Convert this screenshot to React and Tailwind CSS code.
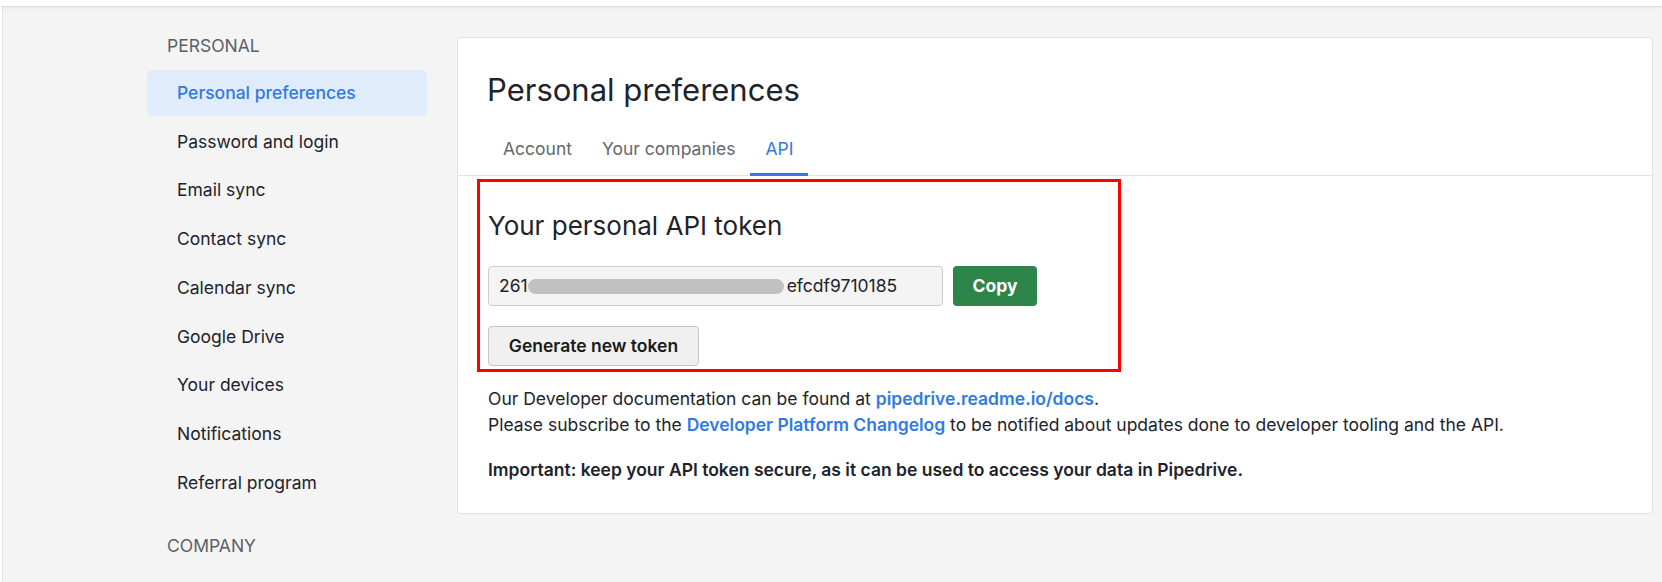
const personalItems = [
  'Personal preferences',
  'Password and login',
  'Email sync',
  'Contact sync',
  'Calendar sync',
  'Google Drive',
  'Your devices',
  'Notifications',
  'Referral program',
];

const tabs = ['Account', 'Your companies', 'API'];

function Sidebar() {
  return (
    <aside className="w-[280px] shrink-0 pt-[27px]">
      <div className="px-5 text-[17.5px] leading-[26px] text-[#5d5f66] mb-[11px]">PERSONAL</div>
      <nav className="flex flex-col gap-[2.75px]">
        {personalItems.map((item, i) => (
          <a
            key={item}
            className={`h-[46px] flex items-center px-[30px] rounded-md text-[17.5px] ${
              i === 0 ? 'bg-[#e0ecfc] text-[#317ae2] font-medium' : 'text-[#21232c]'
            }`}
          >
            {item}
          </a>
        ))}
      </nav>
      <div className="px-5 mt-[27px] text-[17.5px] leading-[26px] text-[#5d5f66]">COMPANY</div>
    </aside>
  );
}

function TokenBox() {
  return (
    <div className="-ml-[11px] w-[644px] border-[3px] border-[#ff0000] pl-[8px] pt-[27.5px] pb-[3px]">
      <h2 className="text-[26px] leading-[32px] font-normal text-[#21232c]">Your personal API token</h2>
      <div className="mt-[24.5px] flex items-center gap-[10px]">
        <div className="w-[455px] h-[40px] flex items-center pl-[10px] rounded border border-[#cdcdcd] bg-[#f4f4f4] text-[17.5px] text-[#21232c]">
          <span>261</span>
          <span className="w-[256px] h-[15px] rounded-full bg-[#c1c1c1]" />
          <span className="ml-[3px]">efcdf9710185</span>
        </div>
        <button className="w-[84px] h-[40px] rounded bg-[#2e8549] text-white text-[17.5px] font-bold">Copy</button>
      </div>
      <button className="mt-[20px] w-[211px] h-[40px] rounded border border-[#c6c6c6] bg-[#f0f0f0] text-[17.5px] font-semibold text-[#1a1a1a]">
        Generate new token
      </button>
    </div>
  );
}

function Card() {
  return (
    <section className="flex-1 mt-[31px] mr-[9px] bg-white border border-[#e3e3e3] rounded pt-[34px] pb-[30px]">
      <h1 className="px-[29px] text-[31px] leading-[36px] font-normal text-[#21232c]">Personal preferences</h1>
      <div className="mt-[29px] pl-[30px] flex border-b border-[#e3e3e3]">
        {tabs.map((tab) => (
          <button
            key={tab}
            className={`-mb-px px-[15px] pb-[12px] text-[17.5px] leading-[24px] border-b-[3px] ${
              tab === 'API' ? 'border-[#317ae2] text-[#317ae2]' : 'border-transparent text-[#65676e]'
            }`}
          >
            {tab}
          </button>
        ))}
      </div>
      <div className="px-[30px] pt-[3px]">
        <TokenBox />
        <p className="mt-[14px] text-[17.5px] leading-[26px] text-[#21232c]">
          Our Developer documentation can be found at{' '}
          <a className="text-[#317ae2] font-semibold">pipedrive.readme.io/docs</a>.
          <br />
          Please subscribe to the <a className="text-[#317ae2] font-semibold">Developer Platform Changelog</a> to be
          notified about updates done to developer tooling and the API.
        </p>
        <p className="mt-[19px] text-[17.5px] leading-[26px] font-semibold text-[#21232c]">
          Important: keep your API token secure, as it can be used to access your data in Pipedrive.
        </p>
      </div>
    </section>
  );
}

export default function App() {
  return (
    <div className="h-[582px] overflow-hidden bg-white font-[Inter,sans-serif]">
      <div className="h-[6px] bg-white relative z-10 shadow-[0_1px_3px_rgba(0,0,0,0.12)]" />
      <div className="h-[576px] ml-[2px] bg-[#f4f4f4] border-l border-[#e6e6e6] flex items-start pl-[144px] gap-[30px]">
        <Sidebar />
        <Card />
      </div>
    </div>
  );
}
